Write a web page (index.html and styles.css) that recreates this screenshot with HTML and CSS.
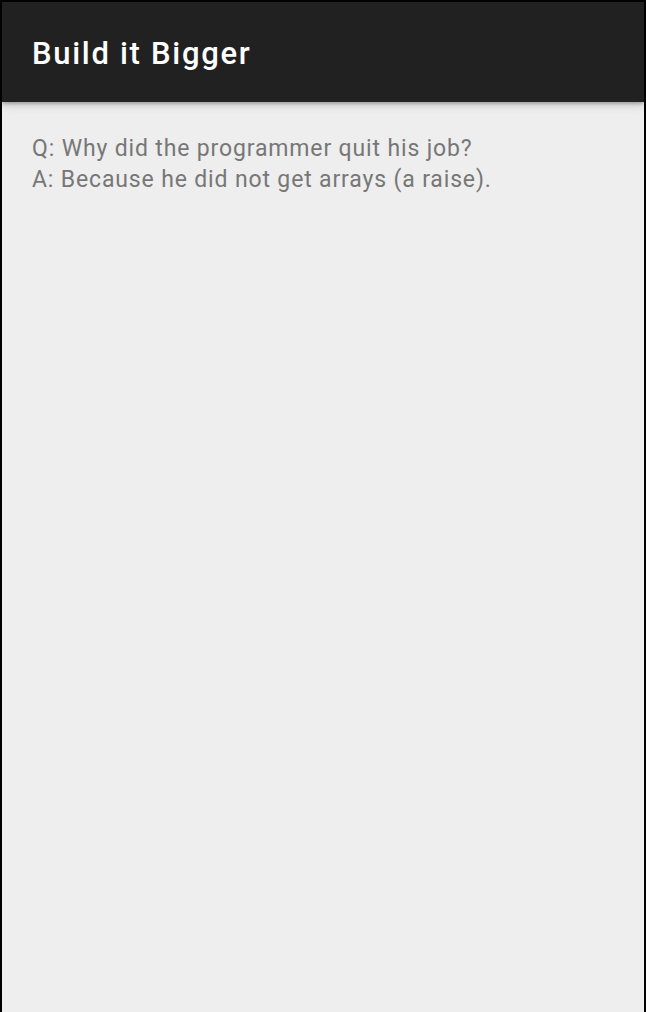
FILE: index.html
```html
<!DOCTYPE html>
<html>
<head>
<meta charset="utf-8">
<link rel="stylesheet" href="styles.css">
</head>
<body>
<div class="frame">
  <header class="toolbar">
    <h1 class="title">Build it Bigger</h1>
  </header>
  <main class="content">
    <p class="joke">Q: Why did the programmer quit his job?<br>A: Because he did not get arrays (a raise).</p>
  </main>
</div>
</body>
</html>
```
FILE: styles.css
```css
html, body {
  margin: 0;
  padding: 0;
  height: 100%;
  background: #000;
}
.frame {
  box-sizing: border-box;
  height: 100%;
  padding: 2px 2px 0 2px;
  display: flex;
  flex-direction: column;
}
.toolbar {
  position: relative;
  z-index: 1;
  box-sizing: border-box;
  height: 100px;
  padding-top: 3px;
  background: #212121;
  display: flex;
  align-items: center;
  padding-left: 30px;
  box-shadow: 0 2px 3px rgba(0,0,0,0.22), 0 4px 8px rgba(0,0,0,0.14);
}
.title {
  margin: 0;
  font-family: Roboto, "Liberation Sans", sans-serif;
  font-weight: 500;
  font-size: 31px;
  letter-spacing: 1.7px;
  color: #ffffff;
}
.content {
  flex: 1;
  background: #eeeeee;
  padding: 31px 30px;
}
.joke {
  margin: 0;
  font-family: Roboto, "Liberation Sans", sans-serif;
  font-size: 23px;
  line-height: 31px;
  letter-spacing: 0.85px;
  color: #777777;
}
```
